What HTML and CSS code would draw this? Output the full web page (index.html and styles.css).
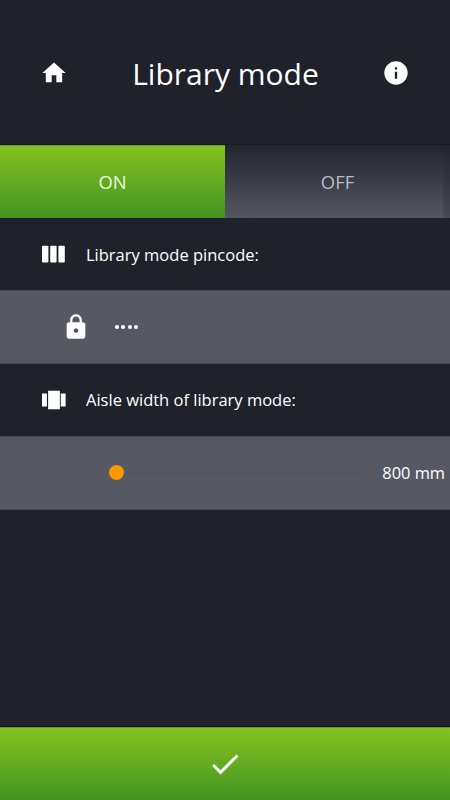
FILE: index.html
```html
<!DOCTYPE html>
<html lang="en">
<head>
<meta charset="utf-8">
<title>Library mode</title>
<link rel="stylesheet" href="styles.css">
</head>
<body>
<header class="header">
  <svg class="icon" viewBox="0 0 24 24"><path d="M10 20v-6h4v6h5v-8h3L12 3 2 12h3v8z"/></svg>
  <h1 class="title">Library mode</h1>
  <svg class="icon" viewBox="0 0 24 24"><path d="M12 2a10 10 0 1 0 0 20 10 10 0 0 0 0-20zm1 15h-2v-6h2zm0-8h-2V7h2z"/></svg>
</header>
<div class="switch">
  <div class="option on">ON</div>
  <div class="option off">OFF</div>
</div>
<main class="settings">
  <div class="label">
    <svg class="icon" viewBox="0 0 28 28"><rect x="2" y="5.7" width="6.4" height="16.8" rx="1"/><rect x="10.2" y="5.7" width="6.4" height="16.8" rx="1"/><rect x="18.4" y="5.7" width="6.4" height="16.8" rx="1"/></svg>
    <span>Library mode pincode:</span>
  </div>
  <div class="field pin">
    <svg class="icon" viewBox="0 0 24 24"><path d="M18 8h-1V6c0-2.760-2.240-5-5-5S7 3.240 7 6v2H6c-1.100 0-2 .9-2 2v10c0 1.100.9 2 2 2h12c1.100 0 2-.9 2-2V10c0-1.100-.9-2-2-2zm-6 9c-1.100 0-2-.9-2-2s.9-2 2-2 2 .9 2 2-.9 2-2 2zm3.100-9H8.900V6c0-1.710 1.390-3.100 3.100-3.100s3.100 1.390 3.100 3.100z"/></svg>
    <div class="dots"><i></i><i></i><i></i><i></i></div>
  </div>
  <div class="label">
    <svg class="icon" viewBox="0 0 28 28"><path d="M2 7.500h4.900v13.100H2zM8.100 4.800h11.800v18.500H8.100zM20.800 7.500h4.800v13.100h-4.800z"/></svg>
    <span>Aisle width of library mode:</span>
  </div>
  <div class="field width">
    <div class="slider"><div class="thumb"></div><div class="track"></div></div>
    <span class="value">800 mm</span>
  </div>
</main>
<footer class="confirm">
  <svg class="check" viewBox="0 0 24 24"><path d="M9 16.170 4.830 12l-1.420 1.410L9 19 21 7l-1.410-1.410z"/></svg>
</footer>
</body>
</html>
```
FILE: styles.css
```css
* { box-sizing: border-box; }

body {
  margin: 0;
  height: 800px;
  display: flex;
  flex-direction: column;
  overflow: hidden;
  background: #1f222b;
  color: #fff;
  font-family: "Open Sans", "Noto Sans", sans-serif;
}

.icon { width: 28px; height: 28px; flex: none; fill: #fff; }

.header {
  height: 144px;
  flex: none;
  display: flex;
  align-items: center;
  justify-content: space-between;
  padding: 1px 40px 0;
}

.title { margin: 0; padding: 3px 0 0 1px; font-size: 30px; font-weight: 400; line-height: 40px; white-space: nowrap; }

.switch { height: 74px; flex: none; display: flex; border-top: 1px solid #15181e; }

.option {
  flex: 1;
  display: flex;
  align-items: center;
  justify-content: center;
  font-size: 18.4px;
}

.on {
  background: linear-gradient(#84c320, #429521);
  box-shadow: inset 0 1px 0 #6b9b2c;
  color: #eef6e4;
}

.off {
  background:
    linear-gradient(90deg, transparent 217px, rgba(31, 34, 43, .28) 220px),
    linear-gradient(#22252d, #3b3e47 50%, #555862);
  color: #b9bcc4;
}

.settings { flex: 1; }

.label {
  height: 72.4px;
  display: flex;
  align-items: center;
  gap: 18px;
  padding-left: 40px;
  font-size: 16.5px;
  white-space: nowrap;
}

.field {
  height: 73.4px;
  display: flex;
  align-items: center;
  background: #565963;
  border-top: 1px solid #464953;
  border-bottom: 1px solid #464953;
}

.pin { padding: 0 0 1px 62px; gap: 25px; }

.dots { display: flex; gap: 2.3px; }
.dots i { width: 4px; height: 4px; border-radius: 50%; background: #fff; }

.width { padding: 0 5px 0 108.500px; justify-content: space-between; font-size: 16.4px; }

.slider { width: 251.500px; display: flex; align-items: center; }
.thumb { width: 15px; height: 15px; border-radius: 50%; background: #ff9800; }
.track { flex: 1; height: 2px; background: #535660; }
.value { white-space: nowrap; }

.confirm {
  height: 73px;
  flex: none;
  display: flex;
  align-items: center;
  justify-content: center;
  background: linear-gradient(#84c320, #429521);
  border-top: 1px solid #6b9b2c;
  box-shadow: 0 -1px 0 #12150f;
}

.check { width: 36px; height: 36px; fill: #fff; }
```
